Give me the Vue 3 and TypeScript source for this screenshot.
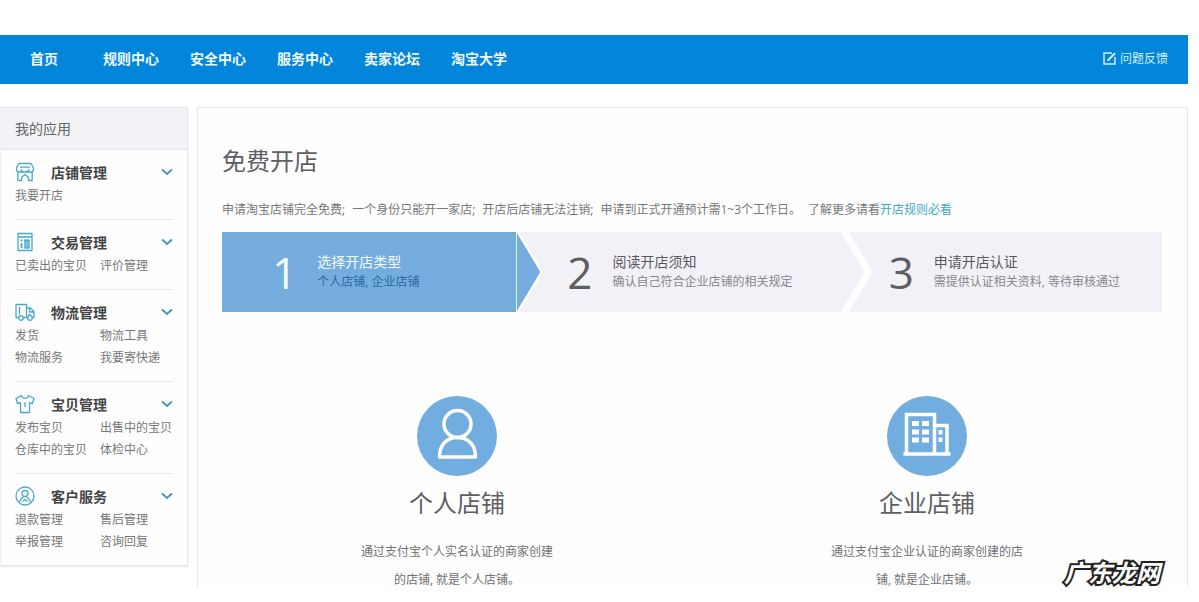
<script setup lang="ts">
interface MenuGroup {
  icon: 'shop' | 'trade' | 'truck' | 'shirt' | 'service'
  title: string
  links: string[]
}

interface Step {
  title: string
  note: string
}

interface ShopType {
  icon: 'person' | 'building'
  title: string
  text: string
}

const navItems: string[] = ['首页', '规则中心', '安全中心', '服务中心', '卖家论坛', '淘宝大学']

const groups: MenuGroup[] = [
  { icon: 'shop', title: '店铺管理', links: ['我要开店'] },
  { icon: 'trade', title: '交易管理', links: ['已卖出的宝贝', '评价管理'] },
  { icon: 'truck', title: '物流管理', links: ['发货', '物流工具', '物流服务', '我要寄快递'] },
  { icon: 'shirt', title: '宝贝管理', links: ['发布宝贝', '出售中的宝贝', '仓库中的宝贝', '体检中心'] },
  { icon: 'service', title: '客户服务', links: ['退款管理', '售后管理', '举报管理', '咨询回复'] },
]

const notices: string[] = [
  '申请淘宝店铺完全免费;',
  '一个身份只能开一家店;',
  '开店后店铺无法注销;',
  '申请到正式开通预计需1~3个工作日。',
]

const steps: Step[] = [
  { title: '选择开店类型', note: '个人店铺, 企业店铺' },
  { title: '阅读开店须知', note: '确认自己符合企业店铺的相关规定' },
  { title: '申请开店认证', note: '需提供认证相关资料, 等待审核通过' },
]

const shopTypes: ShopType[] = [
  { icon: 'person', title: '个人店铺', text: '通过支付宝个人实名认证的商家创建的店铺, 就是个人店铺。' },
  { icon: 'building', title: '企业店铺', text: '通过支付宝企业认证的商家创建的店铺, 就是企业店铺。' },
]
</script>

<template>
  <div class="page">
    <header class="topbar">
      <nav class="nav">
        <a v-for="item in navItems" :key="item" href="#">{{ item }}</a>
      </nav>
      <a class="feedback" href="#">
        <svg width="13" height="13" viewBox="0 0 13 13" fill="none" stroke="currentColor" aria-hidden="true">
          <path d="M9 1H1v11h11V5" stroke-width="1.4" />
          <path d="M4.5 8.8 12 1.2" stroke-width="2" />
        </svg>
        问题反馈
      </a>
    </header>

    <div class="body">
      <aside class="sidebar">
        <h2 class="sidebar-title">我的应用</h2>
        <section v-for="group in groups" :key="group.title" class="group">
          <button class="group-head" type="button" aria-expanded="true">
            <svg class="group-icon" width="20" height="20" viewBox="0 0 20 20" aria-hidden="true">
              <template v-if="group.icon === 'shop'">
                <path d="M4 1.5h12l2.5 4.5v1.5a2.6 2.6 0 0 1-2.5 2.500H4a2.600 2.600 0 0 1-2.500-2.500V6zM5 5.200h10" />
                <path d="M2.800 10v8.500h3.700v-3L10 12.500l3.500 3v3h3.700V10M5.500 7.500l3 2.500M14.500 7.500l-3 2.500" />
              </template>
              <template v-else-if="group.icon === 'trade'">
                <path d="M3 1.500h14v17H3zM3 5h14" />
                <path d="M5.500 8.500h2M9 8.500h5.500M6.500 11v5" stroke-width="1.800" />
                <path d="M10 8.500h4V16h-4z" fill="#7cc9dc" />
              </template>
              <template v-else-if="group.icon === 'truck'">
                <path d="M3.500 15.500H1V2.500h10.500v13H8.500M4.500 5v7.500" />
                <path d="M11.500 6h4l3.500 4v5.500h-1.500M12 15.500h.5M14.500 6.500v3.500H19M13 12.800h3" />
                <circle cx="6" cy="16" r="2.300" />
                <circle cx="15" cy="16" r="2.300" />
              </template>
              <template v-else-if="group.icon === 'shirt'">
                <path d="M6.500 1.500 1 4.500l1.500 5 3-.8v9.800h9V8.700l3 .8 1.500-5-5.500-3c-.7 3.800-6.300 3.800-7 0z" />
                <path d="M10 8v5" />
              </template>
              <template v-else>
                <circle cx="10" cy="10" r="9" />
                <circle cx="10" cy="7.500" r="3" />
                <path d="M4.500 16.500c.3-3 2-4.300 4-5.500M15.500 16.500c-.3-3-2-4.300-4-5.500M7.500 15.500l2.500-2 2.500 2" />
              </template>
            </svg>
            <span>{{ group.title }}</span>
            <svg class="chevron" width="12" height="8" viewBox="0 0 12 8" aria-hidden="true">
              <path d="m1 1.500 5 4.500 5-4.500" />
            </svg>
          </button>
          <ul class="links">
            <li v-for="link in group.links" :key="link"><a href="#">{{ link }}</a></li>
          </ul>
        </section>
      </aside>

      <main class="content">
        <h1>免费开店</h1>
        <p class="notice">
          <span v-for="notice in notices" :key="notice">{{ notice }}</span>
          <span>了解更多请看<a href="#">开店规则必看</a></span>
        </p>

        <ol class="steps">
          <li v-for="(step, index) in steps" :key="step.title" class="step">
            <span class="number">{{ index + 1 }}</span>
            <div>
              <h3>{{ step.title }}</h3>
              <p>{{ step.note }}</p>
            </div>
          </li>
        </ol>

        <div class="types">
          <section v-for="shop in shopTypes" :key="shop.title" class="type">
            <svg width="80" height="80" viewBox="0 0 80 80" fill="none" aria-hidden="true">
              <circle cx="40" cy="40" r="40" fill="#72ade0" />
              <g v-if="shop.icon === 'person'" stroke="#fff" stroke-width="3.500">
                <circle cx="40.500" cy="28" r="13.500" />
                <path d="M22.500 61c0-12 7-19.500 18-19.500S58.500 49 58.500 61z" stroke-linejoin="round" />
              </g>
              <g v-else>
                <path d="M19.500 58V18.500h28V58M47.500 29.500H60V58M16.500 58h47" stroke="#fff" stroke-width="3.500" />
                <path
                  d="M25 25h7v5h-7zM35 25h7v5h-7zM25 33.500h7v5h-7zM35 33.500h7v5h-7zM25 41.500h7v5h-7zM35 41.500h7v5h-7zM51.500 34h4v4.500h-4zM51.500 41.500h4V46h-4z"
                  fill="#fff"
                />
              </g>
            </svg>
            <h2>{{ shop.title }}</h2>
            <p>{{ shop.text }}</p>
          </section>
        </div>
      </main>
    </div>

    <div class="watermark">广东龙网</div>
  </div>
</template>

<style>
body {
  margin: 0;
  background: #fff;
}
</style>

<style scoped>
.page {
  position: relative;
  padding: 35px 11px 15px 0;
  font-family: "Open Sans", "Noto Sans CJK SC", sans-serif;
  font-size: 12px;
  color: #777;
}

h1,
h2,
h3,
p,
ul,
ol {
  margin: 0;
  padding: 0;
  font-weight: 400;
  list-style: none;
}

a {
  color: inherit;
  text-decoration: none;
}

.topbar {
  box-sizing: border-box;
  display: flex;
  align-items: center;
  justify-content: space-between;
  height: 49px;
  padding: 0 20px 3px 16px;
  background: #0285da;
  color: #eefaff;
}

.nav {
  display: flex;
  gap: 31px;
  font-size: 14px;
  font-weight: 700;
}

.nav a {
  min-width: 56px;
  text-align: center;
}

.feedback {
  display: flex;
  align-items: center;
  gap: 4px;
  color: #d5f1fb;
}

.body {
  display: flex;
  align-items: flex-start;
  gap: 9px;
  margin-top: 23px;
}

.sidebar {
  box-sizing: border-box;
  flex: none;
  width: 188px;
  border: 1px solid #e8e8ea;
  border-left-color: #f0f0f2;
  box-shadow: 0 1px 2px #e6e6e8;
  background: #fefefe;
}

.sidebar-title {
  padding: 0 14px;
  border-bottom: 1px solid #e8e8ea;
  background: #f3f2f6;
  font-size: 14px;
  line-height: 41px;
  color: #666;
}

.group {
  margin: 0 14px;
  padding: 10px 0 12px;
}

.group + .group {
  border-top: 1px solid #e6e6e8;
}

.group-head {
  display: flex;
  align-items: center;
  width: 100%;
  height: 24px;
  padding: 0;
  border: 0;
  background: none;
  font-family: inherit;
  font-size: 14px;
  font-weight: 700;
  color: #444;
}

.group-head span {
  flex: 1;
  padding-left: 16px;
  text-align: left;
}

.group-icon {
  fill: none;
  stroke: #4aa9c6;
  stroke-width: 1.3;
  stroke-linejoin: round;
}

.chevron {
  fill: none;
  stroke: #3f93c0;
  stroke-width: 1.8;
}

.links {
  display: grid;
  grid-template-columns: 85px 1fr;
  margin-top: 1px;
  line-height: 22px;
  white-space: nowrap;
}

.content {
  flex: 1;
  min-width: 0;
  padding: 0 25px 0 24px;
  border: 1px solid #e8e8ea;
  border-bottom: 0;
  background: #fefefe;
}

h1 {
  margin-top: 35px;
  font-size: 24px;
  line-height: 36px;
  color: #606064;
}

.notice {
  display: flex;
  flex-wrap: wrap;
  gap: 0 7px;
  margin-top: 21px;
  line-height: 20px;
}

.notice a {
  color: #3fabc0;
}

.steps {
  display: grid;
  grid-template-columns: 297fr 329fr 313fr;
  margin-top: 12px;
}

.step {
  display: flex;
  align-items: center;
  gap: 20px;
  height: 80px;
  padding-left: 48px;
  background: #f2f1f7;
}

.step:not(:last-child) {
  margin-right: -24px;
  clip-path: polygon(0 0, calc(100% - 24px) 0, 100% 50%, calc(100% - 24px) 100%, 0 100%, 24px 50%);
}

.step:first-child {
  position: relative;
  margin-right: -21px;
  padding-left: 50px;
  clip-path: polygon(0 0, calc(100% - 24px) 0, 100% 50%, calc(100% - 24px) 100%, 0 100%);
  background: #75aede;
}

.step:first-child::after {
  content: "";
  position: absolute;
  top: 0;
  right: 23px;
  width: 1px;
  height: 100%;
  background: #e4f1fb;
}

.step:nth-child(2) {
  margin-right: -16px;
}

.step:last-child {
  padding-left: 40px;
  clip-path: polygon(0 0, 100% 0, 100% 100%, 0 100%, 24px 50%);
}

.number {
  font-size: 44px;
  line-height: 48px;
  color: #5e5e62;
}

.step h3 {
  font-size: 14px;
  line-height: 20px;
  color: #5a5a5e;
}

.step p {
  line-height: 20px;
  color: #88888c;
}

.step:first-child .number,
.step:first-child h3 {
  color: #f2fbff;
}

.step:first-child p {
  color: #2b689f;
}

.types {
  display: grid;
  grid-template-columns: 1fr 1fr;
  margin-top: 84px;
  color: #707074;
}

.type {
  display: flex;
  flex-direction: column;
  align-items: center;
  text-align: center;
}

.type h2 {
  margin-top: 9px;
  font-size: 24px;
  line-height: 36px;
  color: #606064;
}

.type p {
  max-width: 200px;
  margin: 17px 0 -7px;
  line-height: 28px;
}

.watermark {
  position: absolute;
  right: 39px;
  bottom: 15px;
  font-size: 24px;
  font-style: italic;
  font-weight: 700;
  line-height: 28px;
  color: #fff;
  -webkit-text-stroke: 4px #222;
  paint-order: stroke fill;
}
</style>
